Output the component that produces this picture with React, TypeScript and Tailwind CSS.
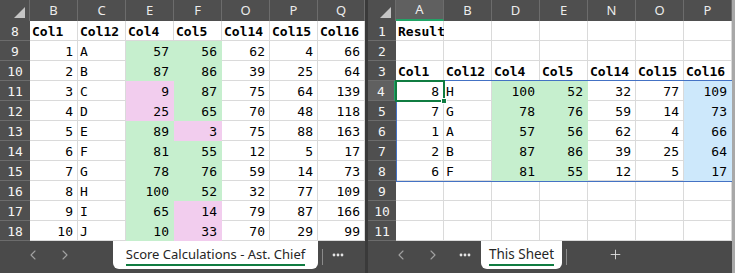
import React from 'react';
import { ChevronLeft, ChevronRight, Plus } from 'lucide-react';

type Fill = '' | 'g' | 'p' | 'b';
type Val = string | number;

interface Row {
  n: number;
  cells: Val[];
  fills?: Fill[];
  bold?: boolean;
}

const fillClass: Record<Fill, string> = {
  '': 'bg-white border-[#dadada]',
  g: 'bg-[#c6efce] border-[#c6efce]',
  p: 'bg-[#f2cdee] border-[#f2cdee]',
  b: 'bg-[#cde8fb] border-[#cde8fb]',
};

const heads = ['Col1', 'Col12', 'Col4', 'Col5', 'Col14', 'Col15', 'Col16'];

const leftRows: Row[] = [
  { n: 8, cells: heads, bold: true },
  { n: 9, cells: [1, 'A', 57, 56, 62, 4, 66], fills: ['', '', 'g', 'g'] },
  { n: 10, cells: [2, 'B', 87, 86, 39, 25, 64], fills: ['', '', 'g', 'g'] },
  { n: 11, cells: [3, 'C', 9, 87, 75, 64, 139], fills: ['', '', 'p', 'g'] },
  { n: 12, cells: [4, 'D', 25, 65, 70, 48, 118], fills: ['', '', 'p', 'g'] },
  { n: 13, cells: [5, 'E', 89, 3, 75, 88, 163], fills: ['', '', 'g', 'p'] },
  { n: 14, cells: [6, 'F', 81, 55, 12, 5, 17], fills: ['', '', 'g', 'g'] },
  { n: 15, cells: [7, 'G', 78, 76, 59, 14, 73], fills: ['', '', 'g', 'g'] },
  { n: 16, cells: [8, 'H', 100, 52, 32, 77, 109], fills: ['', '', 'g', 'g'] },
  { n: 17, cells: [9, 'I', 65, 14, 79, 87, 166], fills: ['', '', 'g', 'p'] },
  { n: 18, cells: [10, 'J', 10, 33, 70, 29, 99], fills: ['', '', 'g', 'p'] },
];

const rf: Fill[] = ['', '', 'g', 'g', '', '', 'b'];
const rightRows: Row[] = [
  { n: 1, cells: ['Result'], bold: true },
  { n: 2, cells: [] },
  { n: 3, cells: heads, bold: true },
  { n: 4, cells: [8, 'H', 100, 52, 32, 77, 109], fills: rf },
  { n: 5, cells: [7, 'G', 78, 76, 59, 14, 73], fills: rf },
  { n: 6, cells: [1, 'A', 57, 56, 62, 4, 66], fills: rf },
  { n: 7, cells: [2, 'B', 87, 86, 39, 25, 64], fills: rf },
  { n: 8, cells: [6, 'F', 81, 55, 12, 5, 17], fills: rf },
  { n: 9, cells: [] },
  { n: 10, cells: [] },
  { n: 11, cells: [] },
];

const Corner = () => (
  <div className="relative h-full border-r border-[#6c6c6c]">
    <svg className="absolute right-[4px] bottom-[3px]" width="11" height="11" viewBox="0 0 11 11">
      <polygon points="11,0 11,11 0,11" fill="#c4c4c4" />
    </svg>
  </div>
);

const Dots = () => (
  <svg width="12" height="4" viewBox="0 0 12 4">
    <circle cx="2" cy="2" r="1.4" fill="#e4e4e4" />
    <circle cx="6" cy="2" r="1.4" fill="#e4e4e4" />
    <circle cx="10" cy="2" r="1.4" fill="#e4e4e4" />
  </svg>
);

interface SheetProps {
  grid: string;
  letters: string[];
  rows: Row[];
  activeCol?: number;
  activeRow?: number;
  overlay?: React.ReactNode;
}

function Sheet({ grid, letters, rows, activeCol, activeRow, overlay }: SheetProps) {
  return (
    <div className="flex flex-col">
      <div className={`grid ${grid} h-[21px] bg-[#4f4f4f] text-[13px] text-[#ececec] font-['Noto_Sans',sans-serif]`}>
        <Corner />
        {letters.map((l, i) => (
          <div
            key={l}
            className={
              i === activeCol
                ? 'flex items-center justify-center border-r border-[#6c6c6c] bg-[#606060] border-b-2 border-b-[#21a366] leading-none'
                : 'flex items-center justify-center border-r border-[#6c6c6c] leading-none'
            }
          >
            {l}
          </div>
        ))}
      </div>
      <div className={`relative grid ${grid} font-['DejaVu_Sans_Mono',monospace] text-[13px] text-black`}>
        {rows.map((r) => (
          <React.Fragment key={r.n}>
            <div
              className={
                r.n === activeRow
                  ? 'h-5 bg-[#606060] border-b border-[#6c6c6c] border-r-2 border-r-[#21a366] text-center text-[#f4f4f4] leading-[16px] pt-[3px]'
                  : 'h-5 bg-[#4f4f4f] border-b border-[#6c6c6c] text-center text-[#f4f4f4] leading-[16px] pt-[3px]'
              }
            >
              {r.n}
            </div>
            {letters.map((l, i) => {
              const v = r.cells[i];
              const f = (r.fills && r.fills[i]) || '';
              const num = typeof v === 'number';
              return (
                <div
                  key={l}
                  className={`h-5 border-r border-b overflow-visible whitespace-nowrap leading-[16px] pt-[3px] ${fillClass[f]} ${
                    num ? 'text-right pr-[4px]' : 'text-left pl-[2px]'
                  } ${r.bold ? 'font-bold' : ''}`}
                >
                  {v}
                </div>
              );
            })}
          </React.Fragment>
        ))}
        {overlay}
      </div>
    </div>
  );
}

interface TabBarProps {
  label: string;
  tabWidth: string;
  textSize: string;
  leftDots?: boolean;
  plus?: boolean;
}

function TabBar({ label, tabWidth, textSize, leftDots, plus }: TabBarProps) {
  return (
    <div className="flex h-8 items-start bg-[#4a4a4a] font-['Noto_Sans',sans-serif]">
      <div className="ml-[17px] flex h-[27px] w-8 items-center justify-center text-[#a2a2a2]">
        <ChevronLeft size={16} strokeWidth={1.6} />
      </div>
      <div className="flex h-[27px] w-8 items-center justify-center text-[#a2a2a2]">
        <ChevronRight size={16} strokeWidth={1.6} />
      </div>
      {leftDots ? (
        <div className="flex h-[27px] w-8 items-center justify-center">
          <Dots />
        </div>
      ) : (
        <div className="w-8" />
      )}
      <div className={`${tabWidth} flex h-[28px] justify-center rounded-b-md bg-white pt-[4px]`}>
        <span className={`h-[21px] whitespace-nowrap border-b-2 border-[#107c41] ${textSize} leading-[18px] text-[#262626]`}>
          {label}
        </span>
      </div>
      <div className="ml-[4px] mt-[8px] h-[16px] w-px bg-[#8a8a8a]" />
      {plus ? (
        <div className="ml-[38px] flex h-[27px] w-5 items-center justify-center text-[#e4e4e4]">
          <Plus size={15} strokeWidth={1.4} />
        </div>
      ) : (
        <div className="ml-[6px] flex h-[27px] w-[18px] items-center justify-center">
          <Dots />
        </div>
      )}
    </div>
  );
}

export default function App() {
  return (
    <div className="flex h-[273px] w-[735px] overflow-hidden bg-[#4a4a4a]">
      <div className="w-[365px] shrink-0 overflow-hidden">
        <Sheet
          grid="grid-cols-[30px_repeat(6,48px)_47px]"
          letters={['B', 'C', 'E', 'F', 'O', 'P', 'Q']}
          rows={leftRows}
        />
        <TabBar label="Score Calculations - Ast. Chief" tabWidth="w-[205px]" textSize="text-[13px]" />
      </div>
      <div className="w-[3px] shrink-0 bg-[#3a3a3a]" />
      <div className="w-[364px] shrink-0 overflow-hidden">
        <Sheet
          grid="grid-cols-[28px_repeat(7,48px)]"
          letters={['A', 'B', 'D', 'E', 'N', 'O', 'P']}
          rows={rightRows}
          activeCol={0}
          activeRow={4}
          overlay={
            <>
              <div className="pointer-events-none absolute left-[28px] top-[59px] h-[102px] w-[337px] border border-[#4472c4]" />
              <div className="pointer-events-none absolute left-[27px] top-[59px] h-[22px] w-[50px] border-2 border-[#107c41]">
                <div className="absolute -bottom-[4px] -right-[4px] h-[6px] w-[6px] border border-white bg-[#107c41]" />
              </div>
            </>
          }
        />
        <TabBar label="This Sheet" tabWidth="w-[81px]" textSize="text-[13.5px]" leftDots plus />
      </div>
      <div className="w-[3px] shrink-0 bg-[#a8a8a8]" />
    </div>
  );
}
